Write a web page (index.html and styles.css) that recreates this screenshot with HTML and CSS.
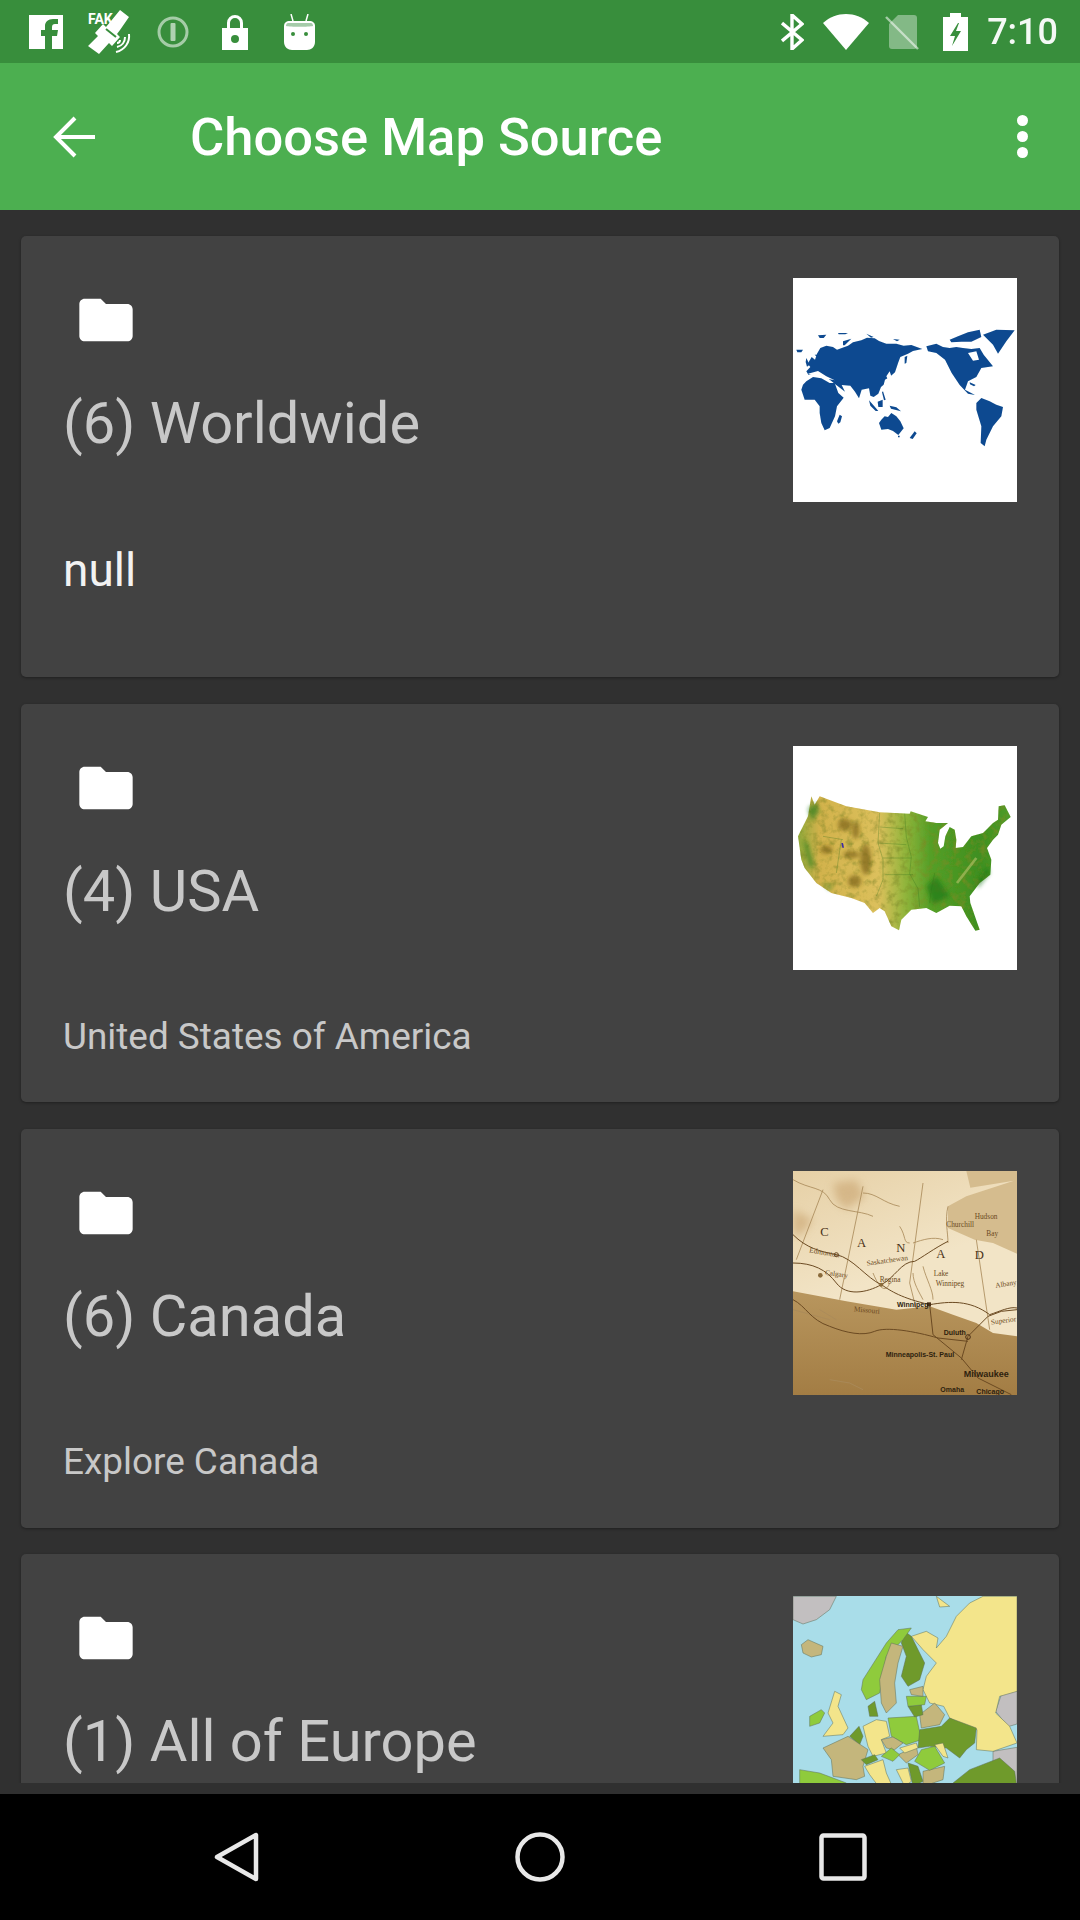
FILE: index.html
```html
<!DOCTYPE html>
<html lang="en">
<head>
<meta charset="utf-8">
<title>Choose Map Source</title>
<link rel="stylesheet" href="styles.css">
</head>
<body>
<div class="screen">
  <header class="status-bar">
    <div class="status-left">
      <svg class="ic ic-fb" viewBox="0 0 34 34"><path fill="#fff" d="M0 0H34V34H23V21H28L29 15H23V12C23 10 24 9 26 9H29V4H24C19 4 16 7 16 11V15H12V21H16V34H0Z"/></svg>
      <svg class="ic ic-sat" viewBox="0 0 44 44">
        <text class="fake" x="1" y="14">FAK</text>
        <path fill="#fff" d="M33 0 42 7 33 20 30 24 33 27 25 36 22 33 12 44 1 36 11 26 8 23 16 14 19 17 24 11Z"/>
        <path fill="none" stroke="#388e3c" stroke-width="2" d="M19 19 29 27"/>
        <path fill="none" stroke="#fff" stroke-width="2" d="M42 24C43 32 38 40 29 42M38 27C38 32 35 36 30 37M33 30C33 32 32 33 30 33"/>
      </svg>
      <svg class="ic ic-prio" viewBox="0 0 32 32"><circle cx="16" cy="16" r="14" fill="none" stroke="#fff" stroke-width="3" opacity=".55"/><rect x="13.500" y="7" width="5" height="18" rx="1" fill="#fff" opacity=".6"/></svg>
      <svg class="ic ic-lock" viewBox="0 0 26 36"><path fill="#fff" fill-rule="evenodd" d="M5 14V9A8 8 0 0 1 21 9V14H26V36H0V14ZM8 14H18V9A5 5 0 0 0 8 9ZM13 21A4 4 0 1 0 13 29 4 4 0 0 0 13 21Z"/></svg>
      <svg class="ic ic-and" viewBox="0 0 31 36">
        <path fill="none" stroke="#fff" stroke-width="1.500" d="M7 0 9 7M24 0 22 7"/>
        <path fill="#fff" d="M6 7H25C29 7 31 9 31 12V28C31 33 27 36 23 36H8C4 36 0 33 0 28V12C0 9 2 7 6 7Z"/>
        <path fill="#7fb584" opacity=".7" d="M4 9H27C28 9 29 10 29 12 25 13 6 13 2 12 2 10 3 9 4 9Z"/>
        <circle cx="9" cy="20" r="2" fill="#388e3c"/><circle cx="22" cy="20" r="2" fill="#388e3c"/>
      </svg>
    </div>
    <div class="status-right">
      <svg class="ic ic-bt" viewBox="0 0 23 36"><path fill="none" stroke="#fff" stroke-width="3.400" d="M1 9 21 26 11 35V1L21 10 1 27"/></svg>
      <svg class="ic ic-wifi" viewBox="0 0 46 36"><path fill="#fff" d="M0 9C13-3 33-3 46 9L23 36Z"/></svg>
      <svg class="ic ic-sim" viewBox="0 0 34 36"><path fill="#fff" opacity=".38" d="M13 1H29C31 1 32 2 32 4V32C32 34 31 35 29 35H7C5 35 4 34 4 32V10Z"/><path stroke="#fff" stroke-width="2.400" opacity=".55" d="M1 3 33 35"/></svg>
      <svg class="ic ic-bat" viewBox="0 0 25 38"><path fill="#fff" fill-rule="evenodd" d="M7 0H18V4H25V38H0V4H7ZM15 10 7 23H12L9 33 18 18H13L16 10Z"/></svg>
      <span class="clock">7:10</span>
    </div>
  </header>

  <div class="app-bar">
    <svg class="back-arrow" viewBox="0 0 42 42"><path fill="none" stroke="#fff" stroke-width="4" d="M42 21H3M22 2 3 21 22 40"/></svg>
    <h1 class="app-title">Choose Map Source</h1>
    <span class="overflow-menu"><i></i><i></i><i></i></span>
  </div>

  <main class="content">
    <div class="list">
      <article class="card card-tall">
        <div class="card-top">
          <div class="card-main">
            <svg class="folder" viewBox="0 0 24 24"><path fill="#fff" d="M10 4H4C2.900 4 2 4.900 2 6V18C2 19.100 2.900 20 4 20H20C21.100 20 22 19.100 22 18V8C22 6.900 21.100 6 20 6H12Z"/></svg>
            <h2 class="card-title">(6) Worldwide</h2>
          </div>
          <svg class="thumb" viewBox="40 25 672 672">
            <defs><filter id="tiny"><feGaussianBlur stdDeviation="1.600"/></filter></defs>
            <rect x="40" y="25" width="672" height="672" fill="#fff"/>
            <g fill="#0b4a90" filter="url(#tiny)">
              <path d="M92 292 84 282 96 262 106 270 112 252 122 235 140 228 160 232 172 240 205 228 220 218 245 212 262 204 285 206 298 214 320 222 350 222 372 228 395 226 428 238 400 244 385 252 362 262 356 278 350 296 346 308 330 322 316 330 312 345 304 352 296 372 282 382 272 378 268 356 246 360 238 386 226 366 212 348 186 346 196 366 165 342 140 322 112 310 86 315 80 305Z"/>
              <path d="M65 360 70 345 80 335 100 322 125 326 150 340 165 340 176 370 192 384 172 410 166 440 150 475 135 482 125 460 120 430 120 410 105 390 75 390Z"/>
              <path d="M298 460 305 450 315 440 325 442 335 430 350 440 362 455 372 476 356 496 340 484 325 478 305 480Z"/>
              <path d="M440 230 470 222 490 232 510 235 530 232 550 235 575 238 600 235 612 255 620 265 640 290 605 295 590 322 565 335 556 360 586 376 565 372 540 346 516 310 496 270 470 250 445 245Z"/>
              <path d="M610 195 650 180 705 182 680 215 655 252 640 225Z"/>
              <path d="M510 210 535 200 565 188 600 180 605 202 575 216 545 216 515 218Z"/>
              <path d="M590 400 605 385 630 395 650 405 670 412 665 440 640 470 620 510 615 530 603 520 605 470 590 420Z"/>
              <path d="M172 455 180 435 187 440 182 458 176 462Z"/>
              <path d="M390 505 405 485 411 491 399 508Z"/>
              <path d="M268 392 284 410 296 424 288 424 272 408ZM294 396 309 390 309 412 296 412ZM330 408 350 413 364 425 334 417ZM310 365 318 390 313 392 307 368ZM375 262 383 258 380 280 375 282ZM355 498 360 498 360 503 355 503Z"/>
              <path d="M50 240 70 240 65 248 53 248ZM115 197 140 195 132 205 120 205ZM175 190 205 190 197 194 177 194ZM260 192 282 202 274 204ZM340 208 360 210 352 215ZM190 215 215 207 195 227 190 227ZM80 265 90 285 82 291 78 277ZM105 255 113 255 113 263ZM570 338 588 346 583 350 571 344Z"/>
            </g>
            <path fill="#fff" d="M565 250 590 245 598 270 580 273ZM85 312 115 304 140 320 165 332 135 326 110 320ZM320 320 330 305 335 320 325 330Z" filter="url(#tiny)"/>
          </svg>
        </div>
        <p class="card-desc card-desc-null">null</p>
      </article>

      <article class="card">
        <div class="card-top">
          <div class="card-main">
            <svg class="folder" viewBox="0 0 24 24"><path fill="#fff" d="M10 4H4C2.900 4 2 4.900 2 6V18C2 19.100 2.900 20 4 20H20C21.100 20 22 19.100 22 18V8C22 6.900 21.100 6 20 6H12Z"/></svg>
            <h2 class="card-title">(4) USA</h2>
          </div>
          <svg class="thumb" viewBox="40 19 672 672">
            <defs>
              <linearGradient id="usa" x1="0" x2="1" y1="0" y2="0">
                <stop offset="0" stop-color="#8fa83a"/>
                <stop offset=".1" stop-color="#d2b24c"/>
                <stop offset=".38" stop-color="#dcc05c"/>
                <stop offset=".5" stop-color="#93b53c"/>
                <stop offset=".62" stop-color="#559f28"/>
                <stop offset=".85" stop-color="#3f8f20"/>
                <stop offset="1" stop-color="#4f9c2a"/>
              </linearGradient>
              <filter id="soft"><feGaussianBlur stdDeviation="6"/></filter>
              <filter id="terrain" x="0" y="0" width="100%" height="100%">
                <feGaussianBlur in="SourceGraphic" stdDeviation="1.400" result="g"/>
                <feTurbulence type="fractalNoise" baseFrequency=".05" numOctaves="3" seed="4" result="n"/>
                <feColorMatrix in="n" type="matrix" values="0 0 0 0 .2  0 0 0 0 .25  0 0 0 0 .02  0 0 0 1.600 -.72" result="d"/>
                <feComposite in="d" in2="g" operator="in" result="c"/>
                <feMerge><feMergeNode in="g"/><feMergeNode in="c"/></feMerge>
              </filter>
            </defs>
            <rect x="40" y="19" width="672" height="672" fill="#fff"/>
            <path fill="url(#usa)" filter="url(#terrain)" d="M95 170 105 195 120 170 200 200 300 218 390 222 393 215 445 232 437 245 470 250 505 250 480 270 475 310 482 327 492 320 497 290 510 262 525 270 530 300 528 325 550 322 575 290 610 280 640 250 655 240 657 200 675 197 693 232 665 255 655 285 640 300 622 325 635 360 632 405 600 430 570 470 572 490 600 570 587 573 560 530 545 500 510 498 470 520 440 505 395 510 365 540 358 572 335 560 315 515 300 505 280 520 255 490 215 475 155 460 110 430 75 385 65 360 55 290 85 230Z"/>
            <g filter="url(#soft)" fill="#7a6018" opacity=".7">
              <ellipse cx="195" cy="255" rx="20" ry="18"/>
              <ellipse cx="228" cy="272" rx="11" ry="26"/>
              <ellipse cx="258" cy="360" rx="16" ry="46"/>
              <ellipse cx="215" cy="345" rx="24" ry="11"/>
              <ellipse cx="225" cy="425" rx="20" ry="18"/>
              <ellipse cx="140" cy="330" rx="18" ry="12"/>
            </g>
            <g filter="url(#soft)" fill="#157516" opacity=".6">
              <path d="M70 300 84 310 104 380 90 385ZM85 205 110 190 120 215 95 245ZM130 430 160 440 150 452Z"/>
              <path d="M440 440 470 410 510 470 460 495ZM590 430 625 380 630 400 595 445Z"/>
            </g>
            <path fill="none" stroke="#b9c46a" stroke-width="8" opacity=".6" filter="url(#tiny)" d="M532 430 590 355"/>
            <path fill="#3a2aa8" d="M185 310 190 310 193 324 188 324Z"/>
            <path fill="none" stroke="#2f6f18" stroke-width="1.500" opacity=".6" d="M375 222 380 292 395 352 390 402 415 447 420 502M300 262 370 267M295 310 380 315M310 355 395 355M315 405 400 405M465 400 455 450 450 490M300 220 295 310 310 360 310 420 290 470M130 290 190 300M185 300 170 400"/>
          </svg>
        </div>
        <p class="card-desc">United States of America</p>
      </article>

      <article class="card">
        <div class="card-top">
          <div class="card-main">
            <svg class="folder" viewBox="0 0 24 24"><path fill="#fff" d="M10 4H4C2.900 4 2 4.900 2 6V18C2 19.100 2.900 20 4 20H20C21.100 20 22 19.100 22 18V8C22 6.900 21.100 6 20 6H12Z"/></svg>
            <h2 class="card-title">(6) Canada</h2>
          </div>
          <svg class="thumb" viewBox="40 34 672 672">
            <defs>
              <linearGradient id="sepia" x1="0" x2=".4" y1="0" y2="1">
                <stop offset="0" stop-color="#e6d0a6"/>
                <stop offset=".55" stop-color="#f2e4c6"/>
              </linearGradient>
              <linearGradient id="sepia-low" x1="0" x2="0" y1="0" y2="1">
                <stop offset="0" stop-color="#b8965e"/>
                <stop offset="1" stop-color="#a37d44"/>
              </linearGradient>
              <filter id="soft2"><feGaussianBlur stdDeviation="12"/></filter>
            </defs>
            <rect x="40" y="34" width="672" height="672" fill="url(#sepia)"/>
            <path fill="#d5bc8e" d="M505 140 560 110 712 60V282L640 250 585 240 505 205ZM560 34H712V62L572 84Z"/>
            <path fill="#cdaa78" opacity=".7" filter="url(#soft2)" d="M160 70 230 60 255 110 200 150 170 120ZM40 150 100 180 60 230 40 220Z"/>
            <path fill="url(#sepia-low)" d="M40 395 200 425 350 450 450 440 520 465 590 490 640 520 712 530V706H40Z"/>
            <path fill="none" stroke="#a98a5a" stroke-width="2.500" d="M40 60C90 90 130 80 150 120S240 150 280 170M250 100C290 100 310 130 360 140M360 200C380 230 370 250 390 250M400 250C430 240 460 230 490 240M505 140C495 180 505 220 505 250M430 70 390 370 410 450M250 80 180 420M590 240 630 510M130 90 50 300M280 340C300 390 320 400 330 370M430 320C440 360 460 390 460 420M400 340C400 370 420 400 430 420M40 450 150 480M120 450 170 480M150 660 210 670 250 690"/>
            <path fill="none" stroke="#6b4a22" stroke-width="3" d="M40 225C80 265 120 275 170 285S260 355 305 375C335 395 365 415 450 435M40 310C100 310 140 330 170 370S260 400 305 375C345 355 365 305 405 305 425 295 465 265 505 245M450 435C510 425 570 420 630 465 660 455 690 440 712 445M40 420C80 440 90 480 150 500 200 520 250 530 285 515S405 515 475 535L565 545M450 435 460 525 545 595 595 655 695 705M565 530 625 470 665 455 712 450M565 530 545 600"/>
            <circle cx="170" cy="285" r="6" fill="none" stroke="#6b4a22" stroke-width="3"/>
            <circle cx="122" cy="347" r="7" fill="#8a6a3a"/>
            <circle cx="305" cy="375" r="6" fill="#8a6a3a"/>
            <rect x="442" y="428" width="12" height="12" fill="#4a2f16"/>
            <circle cx="565" cy="532" r="7" fill="none" stroke="#4a2f16" stroke-width="3"/>
            <g class="map-big">
              <text x="122" y="228">C</text><text x="232" y="262">A</text><text x="350" y="278">N</text><text x="470" y="295">A</text><text x="585" y="297">D</text>
            </g>
            <g class="map-label">
              <text x="585" y="178">Hudson</text><text x="620" y="228">Bay</text><text x="462" y="350">Lake</text><text x="468" y="378">Winnipeg</text>
              <text x="88" y="278" transform="rotate(10 88 278)">Edmonton</text><text x="135" y="345" transform="rotate(8 135 345)">Calgary</text><text x="300" y="366">Regina</text>
              <text x="500" y="202">Churchill</text><text x="648" y="385" transform="rotate(-10 648 385)">Albany</text>
              <text x="262" y="318" transform="rotate(-8 262 318)">Saskatchewan</text><text x="222" y="455" transform="rotate(5 222 455)">Missouri</text>
              <text x="635" y="495" transform="rotate(-8 635 495)">Superior</text>
            </g>
            <g class="map-city">
              <text x="352" y="442">Winnipeg</text><text x="492" y="525">Duluth</text><text x="318" y="592">Minneapolis-St. Paul</text>
              <text x="552" y="652" class="city-lg">Milwaukee</text><text x="482" y="698">Omaha</text><text x="590" y="702">Chicago</text>
            </g>
          </svg>
        </div>
        <p class="card-desc">Explore Canada</p>
      </article>

      <article class="card">
        <div class="card-top">
          <div class="card-main">
            <svg class="folder" viewBox="0 0 24 24"><path fill="#fff" d="M10 4H4C2.900 4 2 4.900 2 6V18C2 19.100 2.900 20 4 20H20C21.100 20 22 19.100 22 18V8C22 6.900 21.100 6 20 6H12Z"/></svg>
            <h2 class="card-title">(1) All of Europe</h2>
          </div>
          <svg class="thumb" viewBox="40 49 672 672">
            <rect x="40" y="49" width="672" height="672" fill="#a9dde9"/>
            <g stroke="#5d6f58" stroke-width="1.500" stroke-linejoin="round">
              <path fill="#c2bfc0" d="M40 50H170L150 90 110 120 70 133 40 120ZM648 395 665 345 712 333V433L685 441ZM640 515 712 503V625H640Z"/>
              <path fill="#f3e58b" d="M610 50H712V335L660 350 648 400 690 440 712 490 640 515 590 510 592 450 540 432 510 415 492 380 450 370 430 330 440 290 470 250 430 210 395 170 440 155 475 175 470 205 500 170 530 110 570 70ZM470 50 510 80 480 82Z"/>
              <path fill="#6f9a2b" d="M365 190 375 155 395 170 435 250 420 300 385 320 365 290 380 230Z"/>
              <path fill="#8fcb3c" d="M250 300 320 190 355 150 395 145 370 180 320 230 300 340 260 360 245 330Z"/>
              <path fill="#c4b67c" d="M335 190 370 200 355 250 345 310 350 370 320 400 305 370 300 300 320 230ZM65 195 85 180 130 200 125 225 95 232 70 220Z"/>
              <path fill="#f3e58b" d="M165 335 185 345 175 380 205 445 190 465 130 470 160 430 145 400Z"/>
              <path fill="#8fcb3c" d="M90 410 125 390 135 400 120 430 90 440Z"/>
              <path fill="#6f9a2b" d="M265 380 285 365 295 410 270 410ZM210 470 238 440 250 470 240 495Z"/>
              <path fill="#c4b67c" d="M130 505 205 470 265 510 250 560 255 590 230 600 160 590 155 540Z"/>
              <path fill="#8fcb3c" d="M60 570 120 580 200 610 200 640 60 640Z"/>
              <path fill="#f3e58b" d="M250 440 290 420 320 425 330 470 305 480 320 520 280 530 265 500Z"/>
              <path fill="#8fcb3c" d="M325 415 410 410 425 480 380 495 335 470Z"/>
              <path fill="#6f9a2b" d="M420 450 485 440 510 415 590 445 585 490 560 510 540 535 500 505 450 500 415 505Z"/>
              <path fill="#c4b67c" d="M420 405 465 370 495 405 480 435 425 445Z"/>
              <path fill="#6f9a2b" d="M385 380 425 375 430 405 405 412Z"/>
              <path fill="#8fcb3c" d="M380 350H440L435 375 385 380Z"/>
              <path fill="#c4b67c" d="M390 330 430 320V350L395 345ZM305 480 340 472 370 490 345 510 320 505ZM355 525 410 500 415 525 380 550ZM430 575 495 560 490 600 430 620Z"/>
              <path fill="#f3e58b" d="M360 505 410 490 415 505 375 520ZM465 495 490 490 505 535 490 530ZM255 560 310 540 320 580 340 625H300L270 585Z"/>
              <path fill="#8fcb3c" d="M305 530 335 505 360 525 340 545ZM405 545 425 510 465 500 495 550 450 572Z"/>
              <path fill="#6f9a2b" d="M245 540 285 525 295 540 260 555ZM385 550 415 560 430 605 400 620ZM520 610 570 570 660 535 705 575 712 625H520Z"/>
              <path fill="#f3e58b" d="M350 570 385 565 395 605 375 620Z"/>
            </g>
          </svg>
        </div>
      </article>
    </div>
  </main>

  <nav class="nav-bar">
    <span class="nav-slot"><svg class="nav-ic" viewBox="0 0 50 50"><path fill="none" stroke="#e8e8e8" stroke-width="4.500" stroke-linejoin="round" d="M44 3V47L5 25Z"/></svg></span>
    <span class="nav-slot"><svg class="nav-ic" viewBox="0 0 50 50"><circle cx="25" cy="25" r="22.500" fill="none" stroke="#e8e8e8" stroke-width="4.500"/></svg></span>
    <span class="nav-slot"><svg class="nav-ic" viewBox="0 0 50 50"><rect x="3.500" y="3.500" width="43" height="43" rx="2" fill="none" stroke="#e8e8e8" stroke-width="4.500"/></svg></span>
  </nav>
</div>
</body>
</html>
```

FILE: styles.css
```css
* { box-sizing: border-box; }
html, body { margin: 0; padding: 0; }
body { background: #000; font-family: Roboto, "Liberation Sans", sans-serif; }

.screen { width: 1080px; height: 1920px; display: flex; flex-direction: column; overflow: hidden; }

.status-bar {
  height: 63px; flex: none; background: #388e3c;
  display: flex; justify-content: space-between; align-items: center;
  padding: 0 22px 0 29px;
}
.status-left, .status-right { display: flex; align-items: center; }
.ic { display: block; flex: none; }
.ic-fb { width: 34px; height: 34px; }
.ic-sat { width: 44px; height: 44px; margin-left: 24px; }
.ic-prio { width: 32px; height: 32px; margin-left: 26px; }
.ic-lock { width: 26px; height: 36px; margin-left: 33px; }
.ic-and { width: 31px; height: 36px; margin-left: 36px; }
.ic-bt { width: 23px; height: 36px; }
.ic-wifi { width: 46px; height: 36px; margin-left: 19px; }
.ic-sim { width: 34px; height: 36px; margin-left: 16px; }
.ic-bat { width: 25px; height: 38px; margin-left: 24px; }
.clock { color: #fff; font-size: 36px; font-weight: 500; margin-left: 19px; line-height: 42px; opacity: .95; }
.fake { fill: #fff; font: 700 14px Roboto, sans-serif; }

.app-bar {
  height: 147px; flex: none; background: #4caf50;
  display: flex; align-items: center; padding: 0 0 0 53px;
}
.back-arrow { width: 42px; height: 42px; flex: none; }
.app-title { margin: 0 0 0 95px; color: #fff; font-size: 52.500px; font-weight: 500; line-height: 56px; flex: 1; }
.overflow-menu { display: flex; flex-direction: column; gap: 5px; margin-right: 52px; }
.overflow-menu i { display: block; width: 11px; height: 11px; border-radius: 50%; background: #fff; }

.content { flex: 1; min-height: 0; background: #303030; padding-bottom: 11px; }
.list {
  height: 100%; overflow: hidden; padding: 26px 21px 0;
  display: flex; flex-direction: column; gap: 26.700px;
}
.card {
  flex: none; background: #424242; border-radius: 5px; height: 398.700px;
  padding: 42px; box-shadow: 0 1px 3px rgba(0,0,0,.35);
}
.card-tall { height: 441px; }
.card-top { display: flex; justify-content: space-between; align-items: flex-start; height: 224px; }
.card-main { display: flex; flex-direction: column; align-items: flex-start; }
.folder { display: block; width: 64px; height: 64px; margin: 10px 0 0 11px; }
.card-title { margin: 37px 0 0; font-size: 57.800px; line-height: 68px; font-weight: 400; color: #c8c8c8; white-space: nowrap; }
.thumb { display: block; width: 224px; height: 224px; flex: none; }
.card-desc { margin: 46px 0 0; font-size: 36.900px; line-height: 42px; color: #c8c8c8; }
.card-desc-null { margin-top: 41px; font-size: 46px; line-height: 54px; color: #f2f2f2; }

.map-big text { font: 400 38px "Liberation Serif", serif; fill: #4a3218; }
.map-label text { font: 400 22px "Liberation Serif", serif; fill: #6b4a22; }
.map-city text { font: 700 21px "Liberation Sans", sans-serif; fill: #2e1f0e; }
.map-city .city-lg { font-size: 27px; }

.nav-bar { height: 126px; flex: none; background: #000; display: flex; justify-content: center; align-items: center; }
.nav-slot { width: 303px; display: flex; justify-content: center; }
.nav-ic { display: block; height: 50px; width: 50px; }
```
